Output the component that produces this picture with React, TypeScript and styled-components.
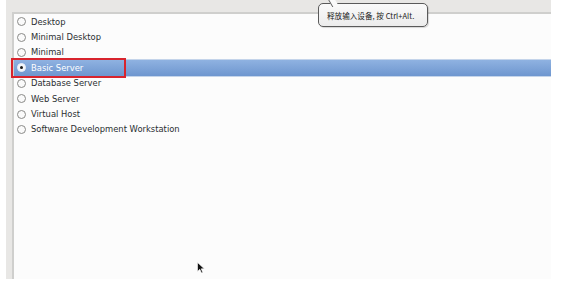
import React from "react";
import styled, { createGlobalStyle } from "styled-components";

const Global = createGlobalStyle`
  html, body { margin: 0; padding: 0; background: #ffffff; }
  body { width: 561px; height: 291px; overflow: hidden; font-family: "DejaVu Sans", "Noto Sans CJK SC", sans-serif; }
`;

const Page = styled.div`
  width: 561px;
  height: 291px;
  background: #ffffff;
  position: relative;
`;

const Window = styled.div`
  width: 545px;
  height: 279px;
  margin-left: 6px;
  background: #e8e7e5;
  display: flex;
  flex-direction: column;
  padding-top: 12px;
  box-sizing: border-box;
`;

const ListBox = styled.div`
  flex: 1;
  margin-left: 6px;
  background: #fcfcfc;
  border-top: 2px solid #cfcfcd;
  border-left: 2px solid #cfcfcd;
  padding-top: 0;
  display: flex;
  flex-direction: column;
`;

const Row = styled.div<{ $selected?: boolean }>`
  height: 15.4px;
  display: flex;
  align-items: center;
  gap: 5px;
  padding-left: 3px;
  font-size: 8.4px;
  color: ${(p) => (p.$selected ? "#ffffff" : "#2a2e30")};
  background: ${(p) =>
    p.$selected ? "linear-gradient(#8fb2e1, #6e96cf)" : "transparent"};
  box-shadow: ${(p) =>
    p.$selected ? "0 -1px 0 #c4d4ea, 0 1px 0 #c4d4ea" : "none"};
  position: relative;
`;

const Radio = styled.span<{ $on?: boolean }>`
  width: 7px;
  height: 7px;
  border-radius: 50%;
  border: 1px solid ${(p) => (p.$on ? "#e8eef8" : "#8a8a88")};
  background: ${(p) => (p.$on ? "#f4f6fa" : "#fafafa")};
  display: flex;
  align-items: center;
  justify-content: center;
  flex: none;
  &::after {
    content: "";
    width: 3px;
    height: 3px;
    border-radius: 50%;
    background: ${(p) => (p.$on ? "#1a1a1a" : "transparent")};
  }
`;

const Highlight = styled.div`
  position: absolute;
  left: -3px;
  top: -2px;
  width: 111px;
  height: 16px;
  border: 2px solid #d8242d;
  pointer-events: none;
`;

const Tooltip = styled.div`
  position: absolute;
  left: 318px;
  top: 3px;
  width: 110px;
  height: 24px;
  box-sizing: border-box;
  border: 1px solid #5a5a5a;
  border-radius: 5px;
  background: linear-gradient(#fafafa, #ececec);
  box-shadow: 1px 1px 1px rgba(0,0,0,0.15);
  font-family: "Noto Sans CJK SC", "DejaVu Sans", sans-serif;
  font-size: 7.6px;
  color: #222;
  display: flex;
  align-items: center;
  padding-left: 8px;
  &::before {
    content: "";
    position: absolute;
    left: 11px;
    top: -5px;
    width: 6px;
    height: 8px;
    background: #fafafa;
    border-left: 1px solid #5a5a5a;
    transform: skewX(30deg);
  }
`;

const Cursor = styled.svg`
  position: absolute;
  left: 197px;
  top: 262px;
`;

const items = [
  "Desktop",
  "Minimal Desktop",
  "Minimal",
  "Basic Server",
  "Database Server",
  "Web Server",
  "Virtual Host",
  "Software Development Workstation",
];

export default function App() {
  return (
    <Page>
      <Global />
      <Window>
        <ListBox>
          {items.map((it) => {
            const sel = it === "Basic Server";
            return (
              <Row key={it} $selected={sel}>
                <Radio $on={sel} />
                {it}
                {sel && <Highlight />}
              </Row>
            );
          })}
        </ListBox>
      </Window>
      <Tooltip>释放输入设备, 按 Ctrl+Alt.</Tooltip>
      <Cursor width="8" height="12" viewBox="0 0 8 12">
        <path d="M0.5 0.5 L0.5 9.5 L2.8 7.3 L4.5 11 L5.8 10.4 L4.2 6.8 L7.3 6.8 Z" fill="#111" stroke="#fff" strokeWidth="0.6" />
      </Cursor>
    </Page>
  );
}
